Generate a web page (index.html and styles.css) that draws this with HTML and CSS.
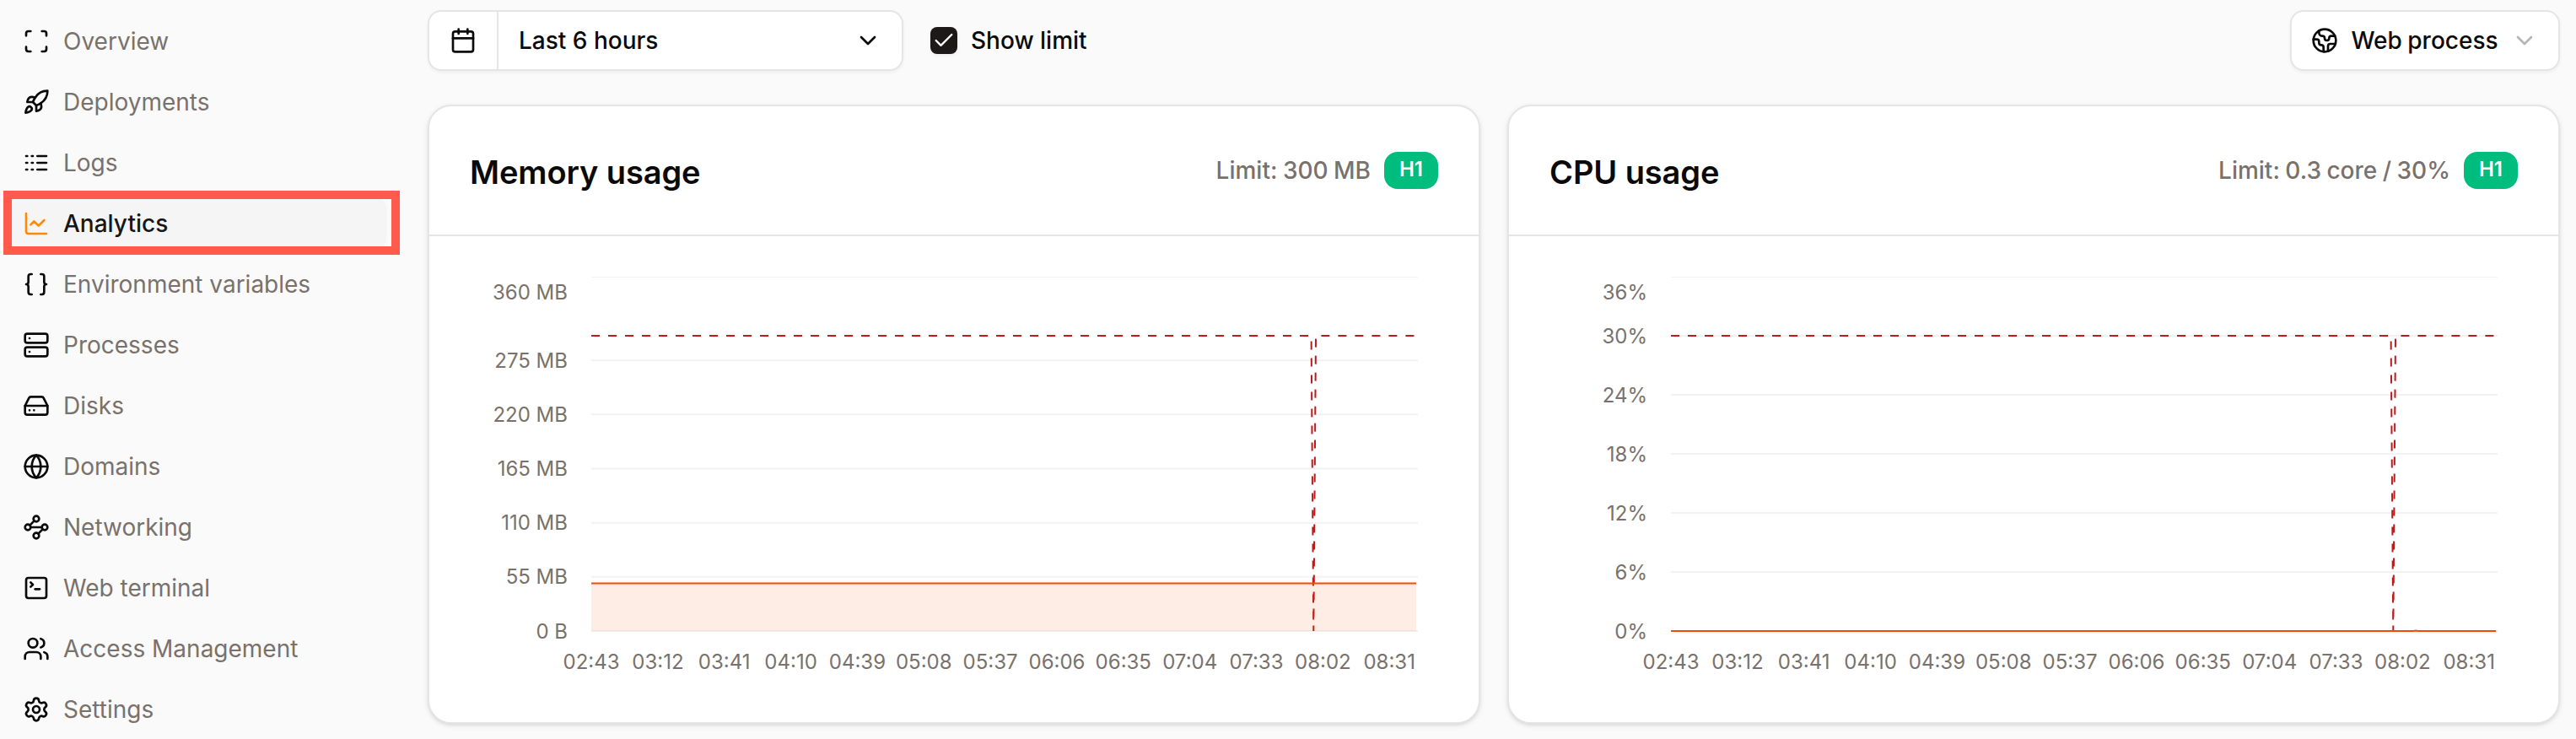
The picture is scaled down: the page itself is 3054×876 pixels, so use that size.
FILE: index.html
```html
<!DOCTYPE html>
<html lang="en-US">
  <head>
    <meta charset="utf-8">
    <title>Analytics</title>
    <link rel="stylesheet" href="styles.css">
  </head>
  <body>
    <nav class="sidebar">
      <a class="nav-item">
        <svg class="icon" viewBox="0 0 24 24"><path d="M3 7V5a2 2 0 0 1 2-2h2"/><path d="M17 3h2a2 2 0 0 1 2 2v2"/><path d="M21 17v2a2 2 0 0 1-2 2h-2"/><path d="M7 21H5a2 2 0 0 1-2-2v-2"/></svg>
        <span>Overview</span>
      </a>
      <a class="nav-item">
        <svg class="icon" viewBox="0 0 24 24"><path d="M4.5 16.5c-1.5 1.26-2 5-2 5s3.74-.5 5-2c.71-.84.7-2.13-.09-2.91a2.18 2.18 0 0 0-2.91-.09z"/><path d="m12 15-3-3a22 22 0 0 1 2-3.95A12.88 12.88 0 0 1 22 2c0 2.72-.78 7.5-6 11a22.35 22.35 0 0 1-4 2z"/><path d="M9 12H4s.55-3.03 2-4c1.62-1.08 5 0 5 0"/><path d="M12 15v5s3.03-.55 4-2c1.08-1.62 0-5 0-5"/></svg>
        <span>Deployments</span>
      </a>
      <a class="nav-item">
        <svg class="icon" viewBox="0 0 24 24"><path d="M13 12h8M13 18h8M13 6h8M3 12h1M3 18h1M3 6h1M8 12h1M8 18h1M8 6h1"/></svg>
        <span>Logs</span>
      </a>
      <a class="nav-item active">
        <svg class="icon" viewBox="0 0 24 24"><path d="M3 3v16a2 2 0 0 0 2 2h16"/><path d="m19 9-5 5-4-4-3 3"/></svg>
        <span>Analytics</span>
      </a>
      <a class="nav-item">
        <svg class="icon" viewBox="0 0 24 24"><path d="M8 3H7a2 2 0 0 0-2 2v5a2 2 0 0 1-2 2 2 2 0 0 1 2 2v5c0 1.1.9 2 2 2h1"/><path d="M16 21h1a2 2 0 0 0 2-2v-5c0-1.1.9-2 2-2a2 2 0 0 1-2-2V5a2 2 0 0 0-2-2h-1"/></svg>
        <span>Environment variables</span>
      </a>
      <a class="nav-item">
        <svg class="icon" viewBox="0 0 24 24"><rect width="20" height="8" x="2" y="2" rx="2"/><rect width="20" height="8" x="2" y="14" rx="2"/><path d="M6 6h.01M6 18h.01"/></svg>
        <span>Processes</span>
      </a>
      <a class="nav-item">
        <svg class="icon" viewBox="0 0 24 24"><path d="M22 12H2"/><path d="M5.45 5.11 2 12v6a2 2 0 0 0 2 2h16a2 2 0 0 0 2-2v-6l-3.45-6.89A2 2 0 0 0 16.76 4H7.24a2 2 0 0 0-1.79 1.11z"/><path d="M6 16h.01M10 16h.01"/></svg>
        <span>Disks</span>
      </a>
      <a class="nav-item">
        <svg class="icon" viewBox="0 0 24 24"><circle cx="12" cy="12" r="10"/><path d="M12 2a14.5 14.5 0 0 0 0 20 14.5 14.5 0 0 0 0-20"/><path d="M2 12h20"/></svg>
        <span>Domains</span>
      </a>
      <a class="nav-item">
        <svg class="icon" viewBox="0 0 24 24"><circle cx="12" cy="4.5" r="2.5"/><path d="m10.2 6.3-3.9 3.9"/><circle cx="4.5" cy="12" r="2.5"/><path d="M7 12h10"/><circle cx="19.5" cy="12" r="2.5"/><path d="m13.8 17.7 3.9-3.9"/><circle cx="12" cy="19.5" r="2.5"/></svg>
        <span>Networking</span>
      </a>
      <a class="nav-item">
        <svg class="icon" viewBox="0 0 24 24"><path d="m7 11 2-2-2-2"/><path d="M11 13h4"/><rect width="18" height="18" x="3" y="3" rx="2"/></svg>
        <span>Web terminal</span>
      </a>
      <a class="nav-item">
        <svg class="icon" viewBox="0 0 24 24"><path d="M16 21v-2a4 4 0 0 0-4-4H6a4 4 0 0 0-4 4v2"/><circle cx="9" cy="7" r="4"/><path d="M22 21v-2a4 4 0 0 0-3-3.87"/><path d="M16 3.13a4 4 0 0 1 0 7.75"/></svg>
        <span>Access Management</span>
      </a>
      <a class="nav-item">
        <svg class="icon" viewBox="0 0 24 24"><path d="M9.671 4.136a2.34 2.34 0 0 1 4.659 0 2.34 2.34 0 0 0 3.319 1.915 2.34 2.34 0 0 1 2.33 4.033 2.34 2.34 0 0 0 0 3.831 2.34 2.34 0 0 1-2.33 4.033 2.34 2.34 0 0 0-3.319 1.915 2.34 2.34 0 0 1-4.659 0 2.34 2.34 0 0 0-3.32-1.915 2.34 2.34 0 0 1-2.33-4.033 2.34 2.34 0 0 0 0-3.831A2.34 2.34 0 0 1 6.35 6.051a2.34 2.34 0 0 0 3.319-1.915"/><circle cx="12" cy="12" r="3"/></svg>
        <span>Settings</span>
      </a>
    </nav>

    <main class="content">
      <div class="toolbar">
        <div class="range-select">
          <div class="range-icon">
            <svg class="icon" viewBox="0 0 24 24"><path d="M8 2v4M16 2v4"/><rect width="18" height="18" x="3" y="4" rx="2"/><path d="M3 10h18"/></svg>
          </div>
          <div class="range-value">
            <span>Last 6 hours</span>
            <svg class="icon" viewBox="0 0 24 24"><path d="m6 9 6 6 6-6"/></svg>
          </div>
        </div>
        <div class="show-limit">
          <div class="checkbox">
            <svg class="check" viewBox="0 0 24 24"><path d="M20 6 9 17l-5-5"/></svg>
          </div>
          <span>Show limit</span>
        </div>
        <div class="process-select">
          <svg class="icon" viewBox="0 0 24 24"><path d="M21.54 15H17a2 2 0 0 0-2 2v4.54"/><path d="M7 3.34V5a3 3 0 0 0 3 3a2 2 0 0 1 2 2c0 1.1.9 2 2 2a2 2 0 0 0 2-2c0-1.1.9-2 2-2h3.17"/><path d="M11 21.95V18a2 2 0 0 0-2-2a2 2 0 0 1-2-2v-1a2 2 0 0 0-2-2H2.05"/><circle cx="12" cy="12" r="10"/></svg>
          <span>Web process</span>
          <svg class="icon muted" viewBox="0 0 24 24"><path d="m6 9 6 6 6-6"/></svg>
        </div>
      </div>

      <div class="cards">
        <section class="card">
          <header class="card-header">
            <h2>Memory usage</h2>
            <span class="limit">Limit: 300 MB</span>
            <span class="badge">H1</span>
          </header>
          <svg class="chart" viewBox="0 0 1244 576">
            <g class="grid">
              <path d="M192 48.5h980" stroke-width="1"/>
              <path d="M192 147.2h980M192 211.3h980M192 275.5h980M192 339.7h980M192 403.8h980M192 468h980"/>
            </g>
            <g class="y-labels">
              <text x="164" y="75">360 MB</text>
              <text x="164" y="156">275 MB</text>
              <text x="164" y="220">220 MB</text>
              <text x="164" y="284">165 MB</text>
              <text x="164" y="348">110 MB</text>
              <text x="164" y="412">55 MB</text>
              <text x="164" y="477">0 B</text>
            </g>
            <path class="limit-line" d="M192 118H1045.6L1048.3 468L1051 118H1171"/>
            <path class="area" d="M192 411.6H1170V468H192z"/>
            <path class="usage-line" d="M192 411.6H1170"/>
            <g class="x-labels">
              <text x="192" y="513">02:43</text>
              <text x="270.9" y="513">03:12</text>
              <text x="349.7" y="513">03:41</text>
              <text x="428.6" y="513">04:10</text>
              <text x="507.4" y="513">04:39</text>
              <text x="586.3" y="513">05:08</text>
              <text x="665.1" y="513">05:37</text>
              <text x="744" y="513">06:06</text>
              <text x="822.8" y="513">06:35</text>
              <text x="901.7" y="513">07:04</text>
              <text x="980.5" y="513">07:33</text>
              <text x="1059.4" y="513">08:02</text>
              <text x="1138.2" y="513">08:31</text>
            </g>
          </svg>
        </section>

        <section class="card">
          <header class="card-header">
            <h2>CPU usage</h2>
            <span class="limit">Limit: 0.3 core / 30%</span>
            <span class="badge">H1</span>
          </header>
          <svg class="chart" viewBox="0 0 1244 576">
            <g class="grid">
              <path d="M192 48.5h980" stroke-width="1"/>
              <path d="M192 118h980M192 188h980M192 258h980M192 328h980M192 398h980M192 468h980"/>
            </g>
            <g class="y-labels">
              <text x="164" y="75">36%</text>
              <text x="164" y="127">30%</text>
              <text x="164" y="197">24%</text>
              <text x="164" y="267">18%</text>
              <text x="164" y="337">12%</text>
              <text x="164" y="407">6%</text>
              <text x="164" y="477">0%</text>
            </g>
            <path class="limit-line" d="M192 118H1045.6L1048.3 468L1051 118H1171"/>
            <path class="usage-line" d="M192 468H1072L1075 467.5L1078 468H1170"/>
            <g class="x-labels">
              <text x="192" y="513">02:43</text>
              <text x="270.9" y="513">03:12</text>
              <text x="349.7" y="513">03:41</text>
              <text x="428.6" y="513">04:10</text>
              <text x="507.4" y="513">04:39</text>
              <text x="586.3" y="513">05:08</text>
              <text x="665.1" y="513">05:37</text>
              <text x="744" y="513">06:06</text>
              <text x="822.8" y="513">06:35</text>
              <text x="901.7" y="513">07:04</text>
              <text x="980.5" y="513">07:33</text>
              <text x="1059.4" y="513">08:02</text>
              <text x="1138.2" y="513">08:31</text>
            </g>
          </svg>
        </section>
      </div>
    </main>
  </body>
</html>
```
FILE: styles.css
```css
* {
  box-sizing: border-box;
}

body {
  display: flex;
  height: 100vh;
  margin: 0;
  overflow: hidden;
  background: #fafafa;
  color: #0a0a0a;
  font: 500 28px/40px Inter, "Liberation Sans", sans-serif;
}

.icon {
  flex: none;
  width: 32px;
  height: 32px;
  fill: none;
  stroke: #0a0a0a;
  stroke-width: 2;
  stroke-linecap: round;
  stroke-linejoin: round;
}

.icon.muted {
  stroke: #b8b5b2;
}

/* sidebar */

.sidebar {
  display: flex;
  flex: none;
  flex-direction: column;
  gap: 8px;
  width: 507px;
  padding: 17px 48px 0 4px;
}

.nav-item {
  display: flex;
  flex: none;
  align-items: center;
  gap: 16px;
  height: 64px;
  padding-left: 23px;
  border-radius: 16px;
  color: #79716b;
  font-weight: 400;
}

.nav-item.active {
  position: relative;
  border-radius: 0 16px 16px 0;
  background: #f5f5f5;
  color: #171717;
  font-weight: 500;
}

.nav-item.active .icon {
  stroke: #ff8904;
}

/* highlight frame over the current page */
.nav-item.active::after {
  content: "";
  position: absolute;
  top: -7px;
  left: 0;
  box-sizing: border-box;
  width: 470px;
  height: 76px;
  border: 10px solid #ff5a4c;
}

/* toolbar */

.content {
  flex: 1;
  padding: 12px 19px 0 0;
}

.toolbar {
  display: flex;
  align-items: center;
  margin-bottom: 40px;
}

.range-select,
.process-select {
  display: flex;
  height: 72px;
  border: 2px solid #e5e5e5;
  border-radius: 16px;
  background: white;
  box-shadow: 0 2px 4px rgba(0, 0, 0, .05);
}

.range-select {
  width: 564px;
}

.range-icon {
  display: flex;
  align-items: center;
  width: 82px;
  padding-left: 24px;
  border-right: 2px solid #e5e5e5;
}

.range-value {
  display: flex;
  flex: 1;
  align-items: center;
  justify-content: space-between;
  padding: 0 24px;
}

.show-limit {
  display: flex;
  align-items: center;
  gap: 16px;
  margin-left: 32px;
}

.checkbox {
  display: flex;
  align-items: center;
  justify-content: center;
  width: 32px;
  height: 32px;
  border-radius: 8px;
  background: #1c1917;
  box-shadow: 0 2px 4px rgba(0, 0, 0, .05);
}

.check {
  width: 28px;
  height: 28px;
  fill: none;
  stroke: white;
  stroke-width: 2;
  stroke-linecap: round;
  stroke-linejoin: round;
}

.process-select {
  align-items: center;
  justify-content: space-between;
  width: 320px;
  margin-left: auto;
  padding: 0 24px 0 23px;
  word-spacing: -1px;
}

/* cards */

.cards {
  display: flex;
  gap: 32px;
}

.card {
  flex: 1;
  height: 734px;
  border: 2px solid #e5e5e5;
  border-radius: 28px;
  background: white;
  box-shadow: 0 2px 6px rgba(0, 0, 0, .1), 0 2px 4px -2px rgba(0, 0, 0, .1);
}

.card-header {
  display: flex;
  align-items: center;
  height: 154px;
  padding: 0 48px;
  border-bottom: 2px solid #e5e5e5;
}

.card-header h2 {
  margin: 0;
  padding-top: 3px;
  font-size: 38px;
  font-weight: 600;
  letter-spacing: -.1px;
}

.limit {
  margin-left: auto;
  color: #79716b;
  word-spacing: -1px;
}

.badge {
  width: 64px;
  height: 44px;
  margin-left: 16px;
  border-radius: 16px;
  background: #00bc7d;
  color: white;
  font-size: 24px;
  font-weight: 600;
  line-height: 42px;
  text-align: center;
}

/* charts */

.chart {
  display: block;
  width: 1244px;
  height: 576px;
  fill: none;
  stroke-width: 2;
}

.grid {
  stroke: #f2f2f2;
}

.limit-line {
  stroke: #b91c1c;
  stroke-dasharray: 10 10;
}

.area {
  fill: #f54a00;
  fill-opacity: .1;
}

.usage-line {
  stroke: #f54a00;
}

.chart text {
  fill: #79716b;
  font-size: 24px;
  font-weight: 400;
}

.y-labels {
  text-anchor: end;
}

.x-labels {
  text-anchor: middle;
}
```
